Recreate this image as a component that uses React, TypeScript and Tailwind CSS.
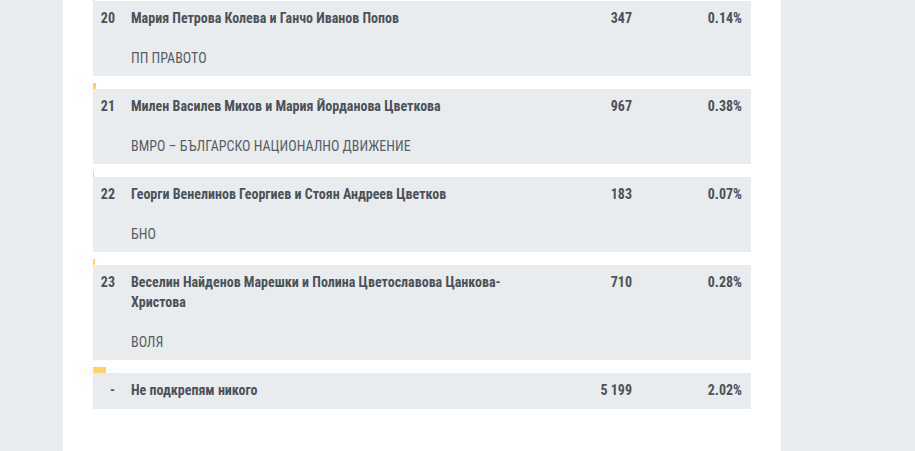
const ROWS = [
  { n: '20', name: 'Мария Петрова Колева и Ганчо Иванов Попов', party: 'ПП ПРАВОТО', votes: '347', pct: 0.14 },
  { n: '21', name: 'Милен Василев Михов и Мария Йорданова Цветкова', party: 'ВМРО – БЪЛГАРСКО НАЦИОНАЛНО ДВИЖЕНИЕ', votes: '967', pct: 0.38 },
  { n: '22', name: 'Георги Венелинов Георгиев и Стоян Андреев Цветков', party: 'БНО', votes: '183', pct: 0.07 },
  { n: '23', name: 'Веселин Найденов Марешки и Полина Цветославова Цанкова-Христова', party: 'ВОЛЯ', votes: '710', pct: 0.28 },
  { n: '-', name: 'Не подкрепям никого', party: '', votes: '5 199', pct: 2.02 },
];

function Row({ r }: { r: (typeof ROWS)[number] }) {
  return (
    <div className="mt-[7px]">
      <div className="h-[6px] bg-[#fcd562]" style={{ width: `${r.pct}%` }} />
      <div className={`flex bg-[#e9ecef] pt-[7px] ${r.party ? 'pb-[8px]' : 'pb-[9px]'} text-[14px] leading-[20px] text-[#4c5258]`}>
        <div className="w-[22px] shrink-0 text-right font-bold">{r.n}</div>
        <div className="ml-[16px] w-[384px] shrink-0">
          <p className="font-bold">{r.name}</p>
          {r.party && <p className="mt-[20px] text-[#585e64]">{r.party}</p>}
        </div>
        <div className="flex-1 text-right font-bold">{r.votes}</div>
        <div className="w-[119px] shrink-0 pr-[9px] text-right font-bold">{r.pct.toFixed(2)}%</div>
      </div>
    </div>
  );
}

export default function App() {
  return (
    <div
      className="h-[451px] overflow-hidden bg-[#e9ecef]"
      style={{ fontFamily: '"Roboto Condensed", Roboto, "Noto Sans", sans-serif', fontStretch: 'condensed' }}
    >
      <div className="ml-[63px] flex h-full w-[718px] flex-col bg-white px-[30px]">
        <div className="-mt-[12px] flex flex-col">
          {ROWS.map(r => <Row key={r.n} r={r} />)}
        </div>
      </div>
    </div>
  );
}
